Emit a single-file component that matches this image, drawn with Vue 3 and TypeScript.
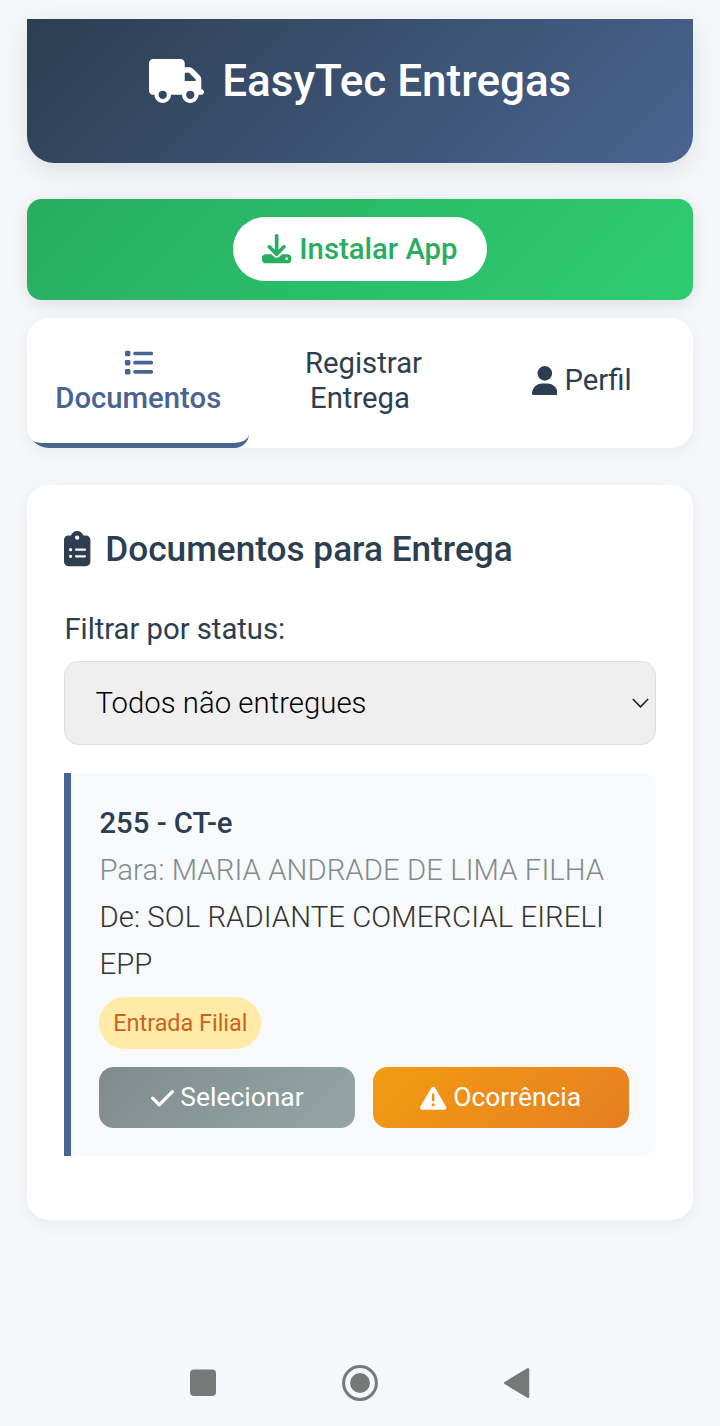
<script setup lang="ts">
import { ref } from 'vue'

interface Icon { w: number; d: string }

const icons: Record<string, Icon> = {
  truck: { w: 640, d: 'M48 0C21.5 0 0 21.5 0 48V368c0 26.5 21.5 48 48 48H64c0 53 43 96 96 96s96-43 96-96H384c0 53 43 96 96 96s96-43 96-96h32c17.7 0 32-14.3 32-32s-14.3-32-32-32V288 256 237.3c0-17-6.7-33.3-18.7-45.3L512 114.7c-12-12-28.3-18.7-45.3-18.7H416V48c0-26.5-21.5-48-48-48H48zM416 160h50.7L544 237.3V256H416V160zM112 416a48 48 0 1 1 96 0 48 48 0 1 1 -96 0zm368-48a48 48 0 1 1 0 96 48 48 0 1 1 0-96z' },
  download: { w: 512, d: 'M288 32c0-17.7-14.3-32-32-32s-32 14.3-32 32V274.7l-73.4-73.4c-12.5-12.5-32.8-12.5-45.3 0s-12.5 32.8 0 45.3l128 128c12.5 12.5 32.8 12.5 45.3 0l128-128c12.5-12.5 12.5-32.8 0-45.3s-32.8-12.5-45.3 0L288 274.7V32zM64 352c-35.3 0-64 28.7-64 64v32c0 35.3 28.7 64 64 64H448c35.3 0 64-28.7 64-64V416c0-35.3-28.7-64-64-64H346.5l-45.3 45.3c-25 25-65.5 25-90.5 0L165.5 352H64zm368 56a24 24 0 1 1 0 48 24 24 0 1 1 0-48z' },
  list: { w: 512, d: 'M40 48C26.7 48 16 58.7 16 72v48c0 13.3 10.7 24 24 24H88c13.3 0 24-10.7 24-24V72c0-13.3-10.7-24-24-24H40zM192 64c-17.7 0-32 14.3-32 32s14.3 32 32 32H480c17.7 0 32-14.3 32-32s-14.3-32-32-32H192zm0 160c-17.7 0-32 14.3-32 32s14.3 32 32 32H480c17.7 0 32-14.3 32-32s-14.3-32-32-32H192zm0 160c-17.7 0-32 14.3-32 32s14.3 32 32 32H480c17.7 0 32-14.3 32-32s-14.3-32-32-32H192zM16 232v48c0 13.3 10.7 24 24 24H88c13.3 0 24-10.7 24-24V232c0-13.3-10.7-24-24-24H40c-13.3 0-24 10.7-24 24zM40 368c-13.3 0-24 10.7-24 24v48c0 13.3 10.7 24 24 24H88c13.3 0 24-10.7 24-24V392c0-13.3-10.7-24-24-24H40z' },
  user: { w: 448, d: 'M224 256A128 128 0 1 0 224 0a128 128 0 1 0 0 256zm-45.7 48C79.8 304 0 383.8 0 482.3C0 498.7 13.3 512 29.7 512H418.3c16.4 0 29.7-13.3 29.7-29.7C448 383.8 368.2 304 269.7 304H178.3z' },
  clipboard: { w: 384, d: 'M192 0c-41.8 0-77.4 26.7-90.5 64H64C28.7 64 0 92.7 0 128V448c0 35.3 28.7 64 64 64H320c35.3 0 64-28.7 64-64V128c0-35.3-28.7-64-64-64H282.5C269.4 26.7 233.8 0 192 0zm0 64a32 32 0 1 1 0 64 32 32 0 1 1 0-64zM72 272a24 24 0 1 1 48 0 24 24 0 1 1 -48 0zm104-16H304c8.8 0 16 7.2 16 16s-7.2 16-16 16H176c-8.8 0-16-7.2-16-16s7.2-16 16-16zM72 368a24 24 0 1 1 48 0 24 24 0 1 1 -48 0zm88 0c0-8.8 7.2-16 16-16H304c8.8 0 16 7.2 16 16s-7.2 16-16 16H176c-8.8 0-16-7.2-16-16z' },
  check: { w: 448, d: 'M438.6 105.4c12.5 12.5 12.5 32.8 0 45.3l-256 256c-12.5 12.5-32.8 12.5-45.3 0l-128-128c-12.5-12.5-12.5-32.8 0-45.3s32.8-12.5 45.3 0L160 338.7 393.4 105.4c12.5-12.5 32.8-12.5 45.3 0z' },
  warning: { w: 512, d: 'M256 32c14.2 0 27.3 7.5 34.5 19.8l216 368c7.3 12.4 7.3 27.7 .2 40.1S486.3 480 472 480H40c-14.3 0-27.6-7.7-34.7-20.1s-7-27.8 .2-40.1l216-368C228.7 39.5 241.8 32 256 32zm0 128c-13.3 0-24 10.7-24 24V296c0 13.3 10.7 24 24 24s24-10.7 24-24V184c0-13.3-10.7-24-24-24zm32 224a32 32 0 1 0 -64 0 32 32 0 1 0 64 0z' },
}

const box = (name: string) => `0 0 ${icons[name].w} 512`

const activeTab = ref('documentos')
</script>

<template>
  <div class="screen">
    <header class="header">
      <svg class="icon" :viewBox="box('truck')"><path :d="icons.truck.d" /></svg>
      <h1>EasyTec Entregas</h1>
    </header>

    <section class="install">
      <button class="install-btn">
        <svg class="icon" :viewBox="box('download')"><path :d="icons.download.d" /></svg>
        <span>Instalar App</span>
      </button>
    </section>

    <nav class="tabs">
      <button class="tab stacked" :class="{ active: activeTab === 'documentos' }" @click="activeTab = 'documentos'">
        <span class="tab-line"><svg class="icon" :viewBox="box('list')"><path :d="icons.list.d" /></svg></span>
        <span>Documentos</span>
      </button>
      <button class="tab stacked" :class="{ active: activeTab === 'registrar' }" @click="activeTab = 'registrar'">
        <span class="indent">Registrar</span>
        <span>Entrega</span>
      </button>
      <button class="tab" :class="{ active: activeTab === 'perfil' }" @click="activeTab = 'perfil'">
        <svg class="icon" :viewBox="box('user')"><path :d="icons.user.d" /></svg>
        <span>Perfil</span>
      </button>
    </nav>

    <main class="panel">
      <h2>
        <svg class="icon" :viewBox="box('clipboard')"><path :d="icons.clipboard.d" /></svg>
        <span>Documentos para Entrega</span>
      </h2>
      <div class="label">Filtrar por status:</div>
      <div class="select">
        <span>Todos não entregues</span>
        <svg class="chevron" viewBox="0 0 16 10"><path d="M0.8 1 8 8.4 15.2 1" /></svg>
      </div>

      <article class="doc">
        <div class="doc-title">255 - CT-e</div>
        <div class="doc-to">Para: MARIA ANDRADE DE LIMA FILHA</div>
        <div class="doc-from">De: SOL RADIANTE COMERCIAL EIRELI EPP</div>
        <span class="badge">Entrada Filial</span>
        <div class="actions">
          <button class="btn select-btn">
            <svg class="icon" :viewBox="box('check')"><path :d="icons.check.d" /></svg>
            <span>Selecionar</span>
          </button>
          <button class="btn warn-btn">
            <svg class="icon" :viewBox="box('warning')"><path :d="icons.warning.d" /></svg>
            <span>Ocorrência</span>
          </button>
        </div>
      </article>
    </main>

    <footer class="sysnav">
      <svg viewBox="0 0 40 40"><rect x="7" y="6.5" width="26" height="26.5" rx="4" /></svg>
      <svg viewBox="0 0 40 40">
        <circle class="ring" cx="20" cy="20" r="16.4" />
        <circle cx="20" cy="20" r="10" />
      </svg>
      <svg viewBox="0 0 40 40"><path class="tri" d="M8.2 20 31 6.3V33.700Z" /></svg>
    </footer>
  </div>
</template>

<style>
body {
  background: #f5f7fb;
}
</style>

<style scoped>
.screen {
  box-sizing: border-box;
  width: 720px;
  height: 1426px;
  padding: 18.5px 27.400px 0;
  display: flex;
  flex-direction: column;
  overflow: hidden;
  background: #f5f7fb;
  font-family: Roboto, "Liberation Sans", sans-serif;
  font-size: 29.3px;
  font-weight: 400;
  color: #2c3e50;
}

button {
  font: inherit;
  color: inherit;
  border: 0;
  margin: 0;
  padding: 0;
  background: none;
}

.icon {
  height: 1em;
  flex: none;
  fill: currentColor;
  display: block;
}

.header {
  box-sizing: border-box;
  height: 144px;
  padding-bottom: 20px;
  display: flex;
  align-items: center;
  justify-content: center;
  gap: 18.500px;
  color: #fff;
  font-size: 44px;
  background: linear-gradient(135deg, #2c3e50, #4a6491);
  border-radius: 0 0 27.500px 27.500px;
  box-shadow: 0 7px 27px rgba(0, 0, 0, 0.1);
}

h1 {
  margin: 0;
  font-size: 44px;
  line-height: 52px;
  font-weight: 500;
  white-space: nowrap;
}

.install {
  box-sizing: border-box;
  margin-top: 36.500px;
  height: 101px;
  padding-bottom: 1px;
  display: flex;
  align-items: center;
  justify-content: center;
  border-radius: 14.600px;
  background: linear-gradient(135deg, #27ae60, #2ecc71);
  box-shadow: 0 4px 18px rgba(0, 0, 0, 0.1);
}

.install-btn {
  width: 254px;
  height: 64px;
  display: flex;
  align-items: center;
  justify-content: center;
  gap: 7.500px;
  border-radius: 32px;
  background: #fff;
  color: #27ae60;
  font-weight: 500;
}

.tabs {
  margin-top: 18px;
  height: 130px;
  flex: none;
  display: grid;
  grid-template-columns: repeat(3, 1fr);
  overflow: hidden;
  border-radius: 22px;
  background: #fff;
  box-shadow: 0 4px 18px rgba(0, 0, 0, 0.05);
}

.tab {
  box-sizing: border-box;
  height: 130px;
  display: flex;
  align-items: center;
  justify-content: center;
  gap: 7px;
  padding-bottom: 5px;
  line-height: 35px;
}

.stacked {
  flex-direction: column;
  gap: 0;
  padding-bottom: 4px;
}

.tab.active {
  padding-bottom: 0;
  border-bottom: 5.500px solid #4a6491;
  border-radius: 14.600px;
  color: #4a6491;
  font-weight: 500;
}

.tab-line {
  height: 35px;
  display: flex;
  align-items: center;
}

.indent {
  padding-left: 7px;
}

.panel {
  box-sizing: border-box;
  margin-top: 37px;
  height: 735px;
  padding: 43px 37px 0;
  border-radius: 22px;
  background: #fff;
  box-shadow: 0 4px 18px rgba(0, 0, 0, 0.05);
}

h2 {
  margin: 0;
  height: 42px;
  display: flex;
  align-items: center;
  gap: 14.500px;
  font-size: 35.200px;
  font-weight: 500;
  white-space: nowrap;
}

.label {
  margin-top: 36px;
  height: 46px;
  line-height: 46px;
  letter-spacing: -0.040px;
}

.select {
  box-sizing: border-box;
  margin-top: 9px;
  height: 84px;
  padding: 0 6px 0 30px;
  display: flex;
  align-items: center;
  justify-content: space-between;
  border: 1.800px solid #ddd;
  border-radius: 14.600px;
  background: #efefef;
  color: #000;
  font-weight: 300;
  letter-spacing: 0.040px;
}

.chevron {
  width: 17px;
  fill: none;
  stroke: #222;
  stroke-width: 1.500;
}

.doc {
  box-sizing: border-box;
  margin-top: 27.500px;
  height: 383.500px;
  padding: 27.500px 27px 0 28px;
  border-left: 7px solid #4a6491;
  border-radius: 0 14.600px 14.600px 0;
  background: #f8f9fb;
  line-height: 46.900px;
}

.doc-title {
  font-weight: 500;
}

.doc-to,
.doc-from {
  font-weight: 300;
  letter-spacing: 0.070px;
}

.doc-to {
  color: #7f8c8d;
}

.doc-from {
  color: #333;
}

.badge {
  display: block;
  width: 162px;
  height: 52px;
  margin-top: 9px;
  border-radius: 26px;
  background: #ffeaa7;
  color: #c8641e;
  font-size: 23.400px;
  line-height: 52px;
  text-align: center;
}

.actions {
  margin-top: 18px;
  display: grid;
  grid-template-columns: 1fr 1fr;
  gap: 18px;
}

.btn {
  box-sizing: border-box;
  height: 61px;
  padding-top: 1.500px;
  display: flex;
  align-items: center;
  justify-content: center;
  gap: 6.500px;
  border-radius: 14.600px;
  color: #fff;
  font-size: 26.400px;
}

.select-btn {
  background: linear-gradient(135deg, #7f8c8d, #95a5a6);
}

.warn-btn {
  background: linear-gradient(135deg, #f39c12, #e67e22);
}

.sysnav {
  margin-top: 142.500px;
  padding-right: 1px;
  display: grid;
  grid-template-columns: repeat(3, 157px);
  justify-content: center;
  justify-items: center;
}

.sysnav svg {
  width: 40px;
  height: 40px;
  fill: #777978;
}

.sysnav .ring {
  fill: none;
  stroke: #777978;
  stroke-width: 3;
}

.sysnav .tri {
  stroke: #777978;
  stroke-width: 2.500;
  stroke-linejoin: round;
}
</style>
